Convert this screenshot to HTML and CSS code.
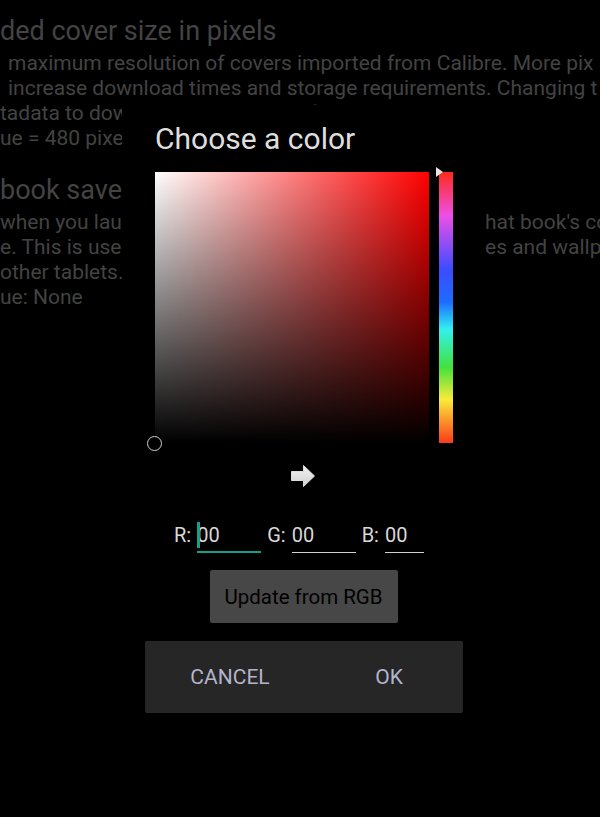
FILE: index.html
```
<!DOCTYPE html>
<html lang="en">
<head>
    <meta charset="UTF-8">
    <meta name="viewport" content="width=device-width, initial-scale=1.0">
    <title>Choose a color</title>
    <link rel="stylesheet" href="styles.css">
</head>
<body>
    <div class="settings">
        <div class="pref">
            <div class="pref-title">ded cover size in pixels</div>
            <div class="line indent">maximum resolution of covers imported from Calibre. More pix</div>
            <div class="line indent">increase download times and storage requirements. Changing t</div>
            <div class="line">tadata to download covers again from the library.</div>
            <div class="line">ue = 480 pixels</div>
        </div>
        <div class="pref second">
            <div class="pref-title">book save</div>
            <div class="line split"><span class="left">when you launch a book from the library,</span><span class="right">hat book's co</span></div>
            <div class="line split"><span class="left">e. This is used by some launchers for imag</span><span class="right">es and wallpa</span></div>
            <div class="line">other tablets.</div>
            <div class="line">ue: None</div>
        </div>
    </div>

    <div class="dialog">
        <div class="dialog-title">Choose a color</div>

        <div class="picker">
            <div class="sv-box">
                <div class="sv-marker"></div>
            </div>
            <div class="hue-bar">
                <div class="hue-marker"></div>
            </div>
        </div>

        <div class="arrow">
            <svg width="26" height="26" viewBox="0 0 26 26">
                <defs>
                    <linearGradient id="arrowFill" x1="0" y1="0" x2="0" y2="1">
                        <stop offset="0" stop-color="#f4f4f4"/>
                        <stop offset="1" stop-color="#cfcfcf"/>
                    </linearGradient>
                </defs>
                <path d="M1.5 8.5 H13.5 V2.5 L24.5 13 L13.5 23.5 V17.5 H1.5 Z" fill="url(#arrowFill)" stroke="#dcdcdc" stroke-width="1" stroke-linejoin="round"/>
            </svg>
        </div>

        <div class="rgb-row">
            <span class="rgb-label">R:</span>
            <span class="rgb-field field-r active"><span class="cursor"></span>00</span>
            <span class="rgb-label">G:</span>
            <span class="rgb-field field-g">00</span>
            <span class="rgb-label">B:</span>
            <span class="rgb-field field-b">00</span>
        </div>

        <button class="update-btn">Update from RGB</button>

        <div class="button-bar">
            <button class="bar-btn">CANCEL</button>
            <button class="bar-btn">OK</button>
        </div>
    </div>
</body>
</html>
```

FILE: styles.css
```
body {
    margin: 0;
    width: 600px;
    height: 817px;
    background: #000;
    font-family: Roboto, "Liberation Sans", sans-serif;
    overflow: hidden;
    position: relative;
}

/* dimmed settings list behind the dialog */
.settings {
    padding-top: 14px;
    color: #434343;
}
.pref-title {
    font-size: 27px;
    line-height: 34px;
    white-space: nowrap;
}
.line {
    font-size: 21px;
    line-height: 25px;
    white-space: nowrap;
    overflow: hidden;
}
.pref .pref-title + .line {
    margin-top: 3px;
}
.indent {
    padding-left: 8px;
}
.second {
    margin-top: 22px;
}
.split {
    display: flex;
}
.split .left {
    width: 485px;
    flex-shrink: 0;
    overflow: hidden;
}

/* dialog */
.dialog {
    position: absolute;
    left: 122px;
    top: 105px;
    width: 361px;
    height: 610px;
    background: #000;
    display: flex;
    flex-direction: column;
    align-items: center;
}
.dialog-title {
    align-self: flex-start;
    margin: 17px 0 0 33px;
    font-size: 30px;
    line-height: 34px;
    color: #dedede;
}
.picker {
    display: flex;
    gap: 10px;
    margin-top: 16px;
    margin-left: 2px;
}
.sv-box {
    position: relative;
    width: 274px;
    height: 271px;
    background:
        linear-gradient(to top, #000, rgba(0, 0, 0, 0)),
        linear-gradient(to right, #fff, #f00);
}
.sv-marker {
    position: absolute;
    left: -8px;
    bottom: -8px;
    width: 13px;
    height: 13px;
    border: 1.5px solid #cfcfcf;
    border-radius: 50%;
}
.hue-bar {
    position: relative;
    width: 14px;
    height: 271px;
    background: linear-gradient(to bottom, #ff2a1a, #ee4fe6 16%, #3c4cff 36%, #1c6cff 48%, #33f0f0 58%, #42e23c 72%, #fbeb3a 84%, #fa3a18 100%);
}
.hue-marker {
    position: absolute;
    left: -3px;
    top: -5px;
    width: 0;
    height: 0;
    border-top: 5px solid transparent;
    border-bottom: 5px solid transparent;
    border-left: 7px solid #e6e6e6;
}
.arrow {
    margin-top: 20px;
    height: 26px;
}
.arrow svg {
    display: block;
}

.rgb-row {
    display: flex;
    align-items: flex-end;
    margin-top: 31px;
    margin-left: -7px;
    font-size: 20px;
    color: #d8d8d8;
}
.rgb-label {
    line-height: 30px;
    padding-bottom: 3px;
}
.rgb-label + .rgb-field {
    margin-left: 6px;
}
.rgb-field {
    position: relative;
    line-height: 30px;
    padding-bottom: 2px;
    border-bottom: 1px solid #cfcfcf;
    margin-right: 6px;
}
.rgb-field.active {
    border-bottom: 2px solid #14a08e;
    padding-bottom: 1px;
}
.field-r { width: 64px; }
.field-g { width: 64px; }
.field-b { width: 39px; margin-right: 0; }
.cursor {
    position: absolute;
    left: 0;
    top: 2px;
    width: 3px;
    height: 26px;
    background: #14a08e;
}

.update-btn {
    margin-top: 17px;
    width: 188px;
    height: 53px;
    border: none;
    border-radius: 2px;
    background: #474747;
    color: #000;
    font-family: inherit;
    font-size: 20.5px;
    margin-left: 2px;
}

.button-bar {
    display: flex;
    margin-top: 18px;
    margin-left: 2px;
    padding-left: 6px;
    box-sizing: border-box;
    width: 318px;
    height: 72px;
    background: #262626;
    border-radius: 2px;
}
.bar-btn {
    flex: none;
    width: 159px;
    border: none;
    background: none;
    color: #b4b4cc;
    font-family: inherit;
    font-size: 21px;
}
```
